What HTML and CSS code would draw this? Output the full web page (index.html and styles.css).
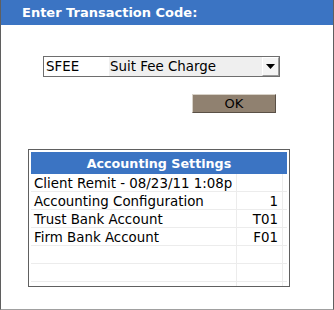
FILE: index.html
```html
<!DOCTYPE html>
<html>
<head>
<meta charset="utf-8">
<link rel="stylesheet" href="styles.css">
</head>
<body>
<div class="frame">
  <div class="title">Enter Transaction Code:</div>
  <div class="content">
    <div class="select">
      <span class="code">SFEE</span>
      <span class="desc">Suit Fee Charge</span>
      <span class="arrow"><svg width="9" height="5" viewBox="0 0 9 5"><path d="M0 0H9L4.5 5Z" fill="#000"/></svg></span>
    </div>
    <div class="ok">OK</div>
    <div class="panel">
      <div class="panel-head">Accounting Settings</div>
      <div class="grid">
        <div class="row"><span class="label">Client Remit - 08/23/11 1:08p</span><span class="val"></span><span class="pad"></span></div>
        <div class="row"><span class="label">Accounting Configuration</span><span class="val">1</span><span class="pad"></span></div>
        <div class="row"><span class="label">Trust Bank Account</span><span class="val">T01</span><span class="pad"></span></div>
        <div class="row"><span class="label">Firm Bank Account</span><span class="val">F01</span><span class="pad"></span></div>
        <div class="row"><span class="label"></span><span class="val"></span><span class="pad"></span></div>
        <div class="row"><span class="label"></span><span class="val"></span><span class="pad"></span></div>
        <div class="row"><span class="label"></span><span class="val"></span><span class="pad"></span></div>
      </div>
    </div>
  </div>
</div>
</body>
</html>
```
FILE: styles.css
```css
html, body {
  margin: 0;
  padding: 0;
  background: #fff;
}
body {
  font-family: "DejaVu Sans", Verdana, sans-serif;
  font-size: 13px;
  color: #000;
}
.frame {
  box-sizing: border-box;
  width: 334px;
  height: 310px;
  border-left: 1px solid #5f5f5f;
  border-right: 1px solid #5f5f5f;
  border-bottom: 1px solid #a0a0a0;
  display: flex;
  flex-direction: column;
  overflow: hidden;
}
.title {
  height: 25px;
  background: #3b74c3;
  color: #fff;
  font-weight: bold;
  font-size: 13px;
  line-height: 25px;
  padding-left: 21px;
  flex: none;
}
.content {
  display: flex;
  flex-direction: column;
  align-items: flex-start;
}
.select {
  box-sizing: border-box;
  margin-top: 31px;
  margin-left: 42px;
  width: 237px;
  height: 21px;
  border: 1px solid #6e6e6e;
  display: flex;
  align-items: stretch;
  font-size: 13.4px;
}
.code {
  width: 63px;
  padding-left: 2px;
  background: #fff;
  line-height: 19px;
}
.desc {
  flex: 1;
  background: #efefef;
  line-height: 19px;
  padding-left: 1px;
}
.arrow {
  box-sizing: border-box;
  width: 17px;
  background: #f4f4f4;
  border-left: 1px solid #fff;
  border-top: 1px solid #fff;
  border-right: 1px solid #9a9a9a;
  border-bottom: 1px solid #9a9a9a;
  display: flex;
  align-items: center;
  justify-content: center;
}
.ok {
  box-sizing: border-box;
  margin-top: 17px;
  margin-left: 191px;
  width: 84px;
  height: 19px;
  background: #908170;
  border-top: 1px solid #d8d2c8;
  border-left: 1px solid #d8d2c8;
  border-right: 1px solid #5a5046;
  border-bottom: 1px solid #5a5046;
  text-align: center;
  line-height: 17px;
}
.panel {
  box-sizing: border-box;
  margin-top: 36px;
  margin-left: 27px;
  width: 262px;
  height: 138px;
  border: 1px solid #606060;
  padding: 2px 2px 0 2px;
  overflow: hidden;
}
.panel-head {
  height: 22px;
  background: #3b74c3;
  color: #fff;
  font-weight: bold;
  text-align: center;
  line-height: 24px;
  font-size: 12.7px;
}
.grid {
  display: flex;
  flex-direction: column;
  font-size: 13.4px;
}
.row {
  display: flex;
  height: 17px;
  border-top: 1px solid #ececec;
  line-height: 19px;
  overflow: hidden;
}
.row:first-child {
  border-top: none;
}
.label {
  width: 202px;
  padding-left: 3px;
  border-right: 1px solid #ececec;
  white-space: nowrap;
}
.val {
  width: 46px;
  text-align: right;
  padding-right: 4px;
  box-sizing: border-box;
  border-right: 1px solid #ececec;
}
.pad {
  flex: 1;
}
```
